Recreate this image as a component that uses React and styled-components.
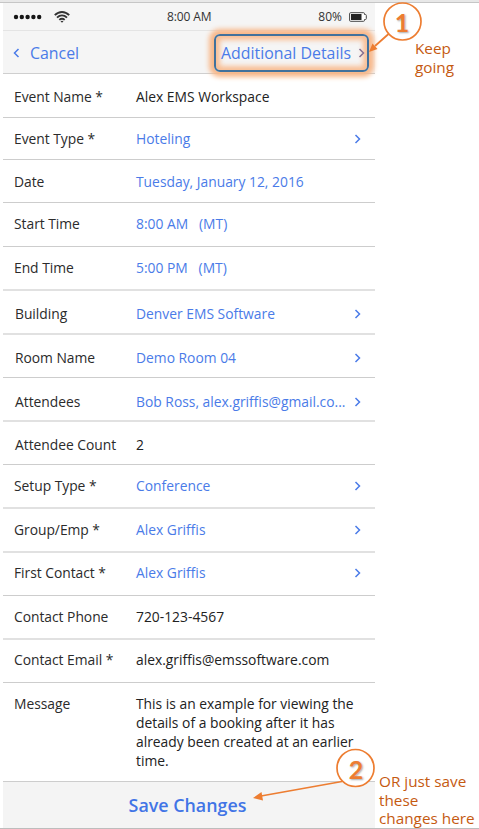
import React from "react";
import styled, { createGlobalStyle } from "styled-components";

const GlobalStyle = createGlobalStyle`
  * { box-sizing: border-box; }
  body { margin: 0; background: #fff; overflow: hidden; }
`;

const Page = styled.main`
  position: relative;
  width: 479px;
  height: 829px;
  padding-left: 3px;
  overflow: hidden;
  font-family: "Open Sans", "Noto Sans", sans-serif;
  background: linear-gradient(#e8e8e8 0 2px, #c6c6c6 2px 3px, #fff 3px 828px, #bdbdbd 828px);
`;

const Phone = styled.div`
  display: flex;
  flex-direction: column;
  width: 372px;
  padding-top: 3px;
`;

const StatusBar = styled.div`
  display: grid;
  grid-template-columns: 154px 1fr auto;
  align-items: center;
  height: 28px;
  padding: 0 8px 0 10px;
  background: #f5f5f5;
  border-bottom: 1px solid #e4e4e4;
  color: #333;
  font-size: 12px;
`;

const Signal = styled.div`
  display: flex;
  align-items: center;
  gap: 12px;
`;

const Clock = styled.span`
  letter-spacing: -0.1px;
`;

const Battery = styled.div`
  display: flex;
  align-items: center;
  gap: 7px;
`;

const NavBar = styled.header`
  position: relative;
  z-index: 1;
  display: flex;
  justify-content: space-between;
  align-items: flex-start;
  height: 43px;
  padding: 3px 6px 0 10px;
  background: #f5f5f5;
  border-bottom: 1px solid #cfcfcf;
  color: #4a7be8;
`;

const NavButton = styled.button`
  display: flex;
  align-items: center;
  height: 38px;
  padding: 0 0 1px;
  border: 0;
  background: none;
  color: inherit;
  font: 400 15.9px/22px "Open Sans", sans-serif;
  gap: 10px;
`;

const HighlightedButton = styled(NavButton)`
  justify-content: space-between;
  gap: 0;
  width: 155px;
  padding: 0 2px 1px 5px;
  border: 2px solid #41719c;
  border-radius: 6px;
  box-shadow: 0 0 5px 5px rgba(248, 184, 138, 1), inset 0 0 5px 4px rgba(248, 184, 138, 0.9);
  white-space: nowrap;
`;

const Row = styled.div`
  display: grid;
  grid-template-columns: 122px 1fr;
  align-items: start;
  height: ${(p) => p.$height}px;
  padding: ${(p) => p.$top}px 14px 0 11px;
  border-bottom: ${(p) => (p.$soft ? "2px solid #e1e1e1" : "1px solid #cdcdcd")};
  background: #fff;
  font-size: 13.85px;
  line-height: 19px;
`;

const Label = styled.span`
  padding-left: ${(p) => (p.$indent ? 1 : 0)}px;
  color: #2b2b2b;
  letter-spacing: -0.03px;
  white-space: nowrap;
`;

const Value = styled.div`
  display: flex;
  justify-content: space-between;
  align-items: center;
  color: ${(p) => (p.$link ? "#4a7be8" : "#222")};
  white-space: pre;
`;

const Footer = styled.footer`
  display: flex;
  justify-content: center;
  height: 46px;
  background: #f4f4f4;
`;

const SaveButton = styled.button`
  padding: 0 3px 0 0;
  border: 0;
  background: none;
  color: #4174e6;
  font: 600 17.85px/47px "Open Sans", sans-serif;
`;

const Annotations = styled.svg`
  position: absolute;
  inset: 0;
  z-index: 2;
  pointer-events: none;
`;

const Badge = styled.span`
  position: absolute;
  z-index: 3;
  left: ${(p) => p.$x}px;
  top: ${(p) => p.$y}px;
  width: 16px;
  color: #ed7d31;
  font: 700 25px/24px Lato, sans-serif;
  text-align: center;
  text-shadow: 1px 1px 2px #aaa;
`;

const Note = styled.p`
  position: absolute;
  left: ${(p) => p.$x}px;
  top: ${(p) => p.$y}px;
  margin: 0;
  color: #c55a11;
  font-size: 15.3px;
  line-height: 18.7px;
  white-space: pre;
`;

const Icon = styled.svg`
  flex: none;
`;

const ChevronIcon = ({ left, color = "#4a7be8" }) => (
  <Icon width="7" height="10" viewBox="0 0 7 10" fill="none" stroke={color} strokeWidth="1.5">
    <path d={left ? "M5.5 1 1.5 5l4 4" : "M1.5 1l4 4-4 4"} />
  </Icon>
);

const SignalIcon = () => (
  <svg width="29" height="6" viewBox="0 0 29 6" fill="#161616">
    {[3, 8.8, 14.6, 20.4, 26.2].map((x) => (
      <ellipse key={x} cx={x} cy="3" rx="2.2" ry="2.3" />
    ))}
  </svg>
);

const WifiIcon = () => (
  <svg width="16" height="12" viewBox="0 0 16 12" fill="none" stroke="#333" strokeWidth="1.9">
    <path d="M.8 4.2C5-.1 11-.1 15.2 4.2M3 6.6c3-2.8 7-2.8 10 0M5.3 8.9c1.6-1.4 3.8-1.4 5.4 0" />
    <path d="M8 11.7 6.5 10.2q1.5-1 3 0Z" fill="#333" stroke="none" />
  </svg>
);

const BatteryIcon = () => (
  <svg width="18" height="10" viewBox="0 0 18 10">
    <path d="M1.5.7h13q1 0 1 1v.8h1q.8 0 .8 1v3q0 1-.8 1h-1v.8q0 1-1 1h-13q-.9 0-.9-1V1.7q0-1 .9-1Z" fill="#fff" stroke="#444" />
    <path d="M2 2h10.5v6H2Z" fill="#222" />
  </svg>
);

const rows = [
  { label: "Event Name *", value: "Alex EMS Workspace", height: 44, top: 13 },
  { label: "Event Type *", value: "Hoteling", link: true, chevron: true, height: 42, top: 11 },
  { label: "Date", value: "Tuesday, January 12, 2016", link: true, height: 43, top: 12 },
  { label: "Start Time", value: "8:00 AM   (MT)", link: true, height: 44, top: 11 },
  { label: "End Time", value: "5:00 PM   (MT)", link: true, height: 44, top: 11, soft: true },
  { label: "Building", value: "Denver EMS Software", link: true, chevron: true, indent: true, height: 44, top: 13, soft: true },
  { label: "Room Name", value: "Demo Room 04", link: true, chevron: true, indent: true, height: 43, top: 13 },
  { label: "Attendees", value: "Bob Ross, alex.griffis@gmail.co...", link: true, chevron: true, indent: true, height: 44, top: 14, soft: true },
  { label: "Attendee Count", value: "2", indent: true, height: 43, top: 13 },
  { label: "Setup Type *", value: "Conference", link: true, chevron: true, height: 44, top: 11, soft: true },
  { label: "Group/Emp *", value: "Alex Griffis", link: true, chevron: true, height: 44, top: 11, soft: true },
  { label: "First Contact *", value: "Alex Griffis", link: true, chevron: true, height: 43, top: 10 },
  { label: "Contact Phone", value: "720-123-4567", height: 44, top: 11, soft: true },
  { label: "Contact Email *", value: "alex.griffis@emssoftware.com", height: 43, top: 10 },
  {
    label: "Message",
    value: "This is an example for viewing the\ndetails of a booking after it has\nalready been created at an earlier\ntime.",
    height: 99,
    top: 11,
  },
];

export default function App() {
  return (
    <Page>
      <GlobalStyle />
      <Phone>
        <StatusBar>
          <Signal>
            <SignalIcon />
            <WifiIcon />
          </Signal>
          <Clock>8:00 AM</Clock>
          <Battery>
            <span>80%</span>
            <BatteryIcon />
          </Battery>
        </StatusBar>
        <NavBar>
          <NavButton>
            <ChevronIcon left />
            Cancel
          </NavButton>
          <HighlightedButton>
            Additional Details
            <ChevronIcon color="#866f91" />
          </HighlightedButton>
        </NavBar>
        {rows.map((row) => (
          <Row key={row.label} $height={row.height} $top={row.top} $soft={row.soft}>
            <Label $indent={row.indent}>{row.label}</Label>
            <Value $link={row.link}>
              {row.value}
              {row.chevron && <ChevronIcon />}
            </Value>
          </Row>
        ))}
        <Footer>
          <SaveButton>Save Changes</SaveButton>
        </Footer>
      </Phone>
      <Annotations width="479" height="829" fill="none" stroke="#ed7d31" strokeWidth="1.7">
        <circle cx="402.5" cy="21.5" r="18.5" fill="#fff" />
        <circle cx="355.5" cy="768" r="18.5" fill="#fff" />
        <path d="M388.5 34 375 46M342 781.5 261 796" />
        <path d="m369 52 3.5-8.5 5 5.5ZM253 798l8.5-6 1.5 8.5Z" fill="#ed7d31" stroke="none" />
      </Annotations>
      <Badge $x={394} $y={10}>1</Badge>
      <Badge $x={348} $y={757}>2</Badge>
      <Note $x={415} $y={39}>{"Keep\ngoing"}</Note>
      <Note $x={379} $y={772}>{"OR just save\nthese\nchanges here"}</Note>
    </Page>
  );
}
